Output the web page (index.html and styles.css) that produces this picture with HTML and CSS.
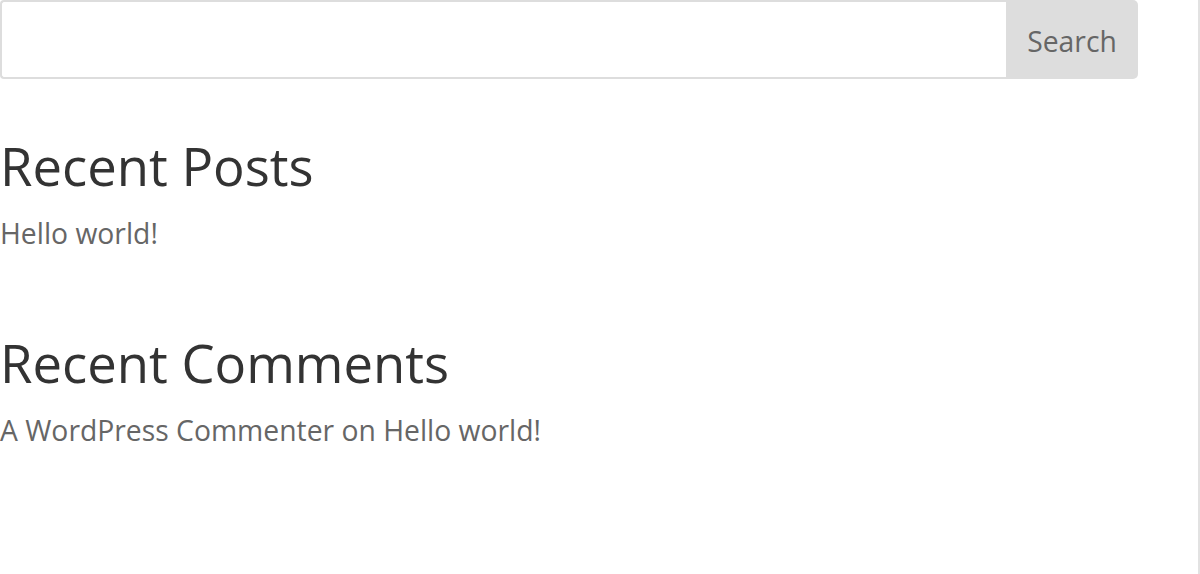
FILE: index.html
```html
<!DOCTYPE html>
<html lang="en">
<head>
  <meta charset="UTF-8">
  <title>Sidebar</title>
  <link rel="stylesheet" href="styles.css">
</head>
<body>
  <div class="sidebar">
    <form class="search-form" onsubmit="return false">
      <input type="text" class="search-input">
      <button type="submit" class="search-btn">Search</button>
    </form>

    <div class="widget">
      <h4 class="widget-title">Recent Posts</h4>
      <ul>
        <li><a href="#">Hello world!</a></li>
      </ul>
    </div>

    <div class="widget">
      <h4 class="widget-title">Recent Comments</h4>
      <ul>
        <li><span class="author">A WordPress Commenter</span> on <a href="#">Hello world!</a></li>
      </ul>
    </div>
  </div>
</body>
</html>
```

FILE: styles.css
```css
html, body {
  margin: 0;
  padding: 0;
  background: #fff;
}
body {
  font-family: 'Open Sans', Arial, sans-serif;
  color: #666;
}
.sidebar {
  min-height: 100vh;
  box-sizing: border-box;
  border-right: 2px solid #e2e2e2;
}
.search-form {
  display: flex;
  width: 1138px;
  height: 79px;
  margin: 0;
}
.search-input {
  flex: 1;
  margin: 0;
  box-sizing: border-box;
  height: 100%;
  border: 2px solid #ddd;
  border-right: none;
  border-radius: 4px 0 0 4px;
  background: #fff;
  font-size: 28px;
}
.search-input:focus {
  outline: none;
}
.search-btn {
  width: 132px;
  height: 100%;
  margin: 0;
  padding: 3px 0 0 0;
  border: none;
  border-radius: 0 5px 5px 0;
  background: #ddd;
  color: #666;
  font-family: 'Open Sans', Arial, sans-serif;
  font-size: 28.3px;
  cursor: pointer;
}
.widget {
  margin-top: 61px;
}
.widget + .widget {
  margin-top: 84px;
}
.widget-title {
  margin: 0;
  font-size: 52.6px;
  line-height: 52px;
  font-weight: 400;
  color: #333;
}
.widget ul {
  list-style: none;
  margin: 21px 0 0 0;
  padding: 0;
}
.widget li {
  font-size: 28.3px;
  line-height: 40px;
}
.widget a {
  color: #666;
  text-decoration: none;
}
```
